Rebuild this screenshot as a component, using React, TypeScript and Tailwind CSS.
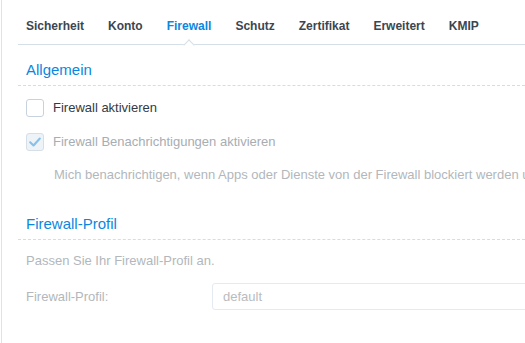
import React from "react";

const TABS = ["Sicherheit", "Konto", "Firewall", "Schutz", "Zertifikat", "Erweitert", "KMIP"];
const ACTIVE_TAB = "Firewall";

const SectionTitle: React.FC<{ title: string; className?: string }> = ({ title, className }) => (
  <div
    className={`pl-2 pb-[6px] border-b border-dashed border-[#d3dde6] text-[15px] leading-[18px] text-[#0a87e0] ${className ?? ""}`}
  >
    {title}
  </div>
);

const Checkbox: React.FC<{ checked?: boolean; disabled?: boolean }> = ({ checked, disabled }) => (
  <span
    className={`flex h-[18px] w-[18px] shrink-0 items-center justify-center rounded-[3px] border ${
      disabled ? "border-[#d5dfe8] bg-[#eef3f7]" : "border-[#c6d3de] bg-white"
    }`}
  >
    {checked && (
      <svg viewBox="0 0 16 16" className="h-[14px] w-[14px]" fill="none">
        <path d="M2.5 8.3 L6.3 12 L13.5 4" stroke="#86c0eb" strokeWidth="2.4" strokeLinecap="round" strokeLinejoin="round" />
      </svg>
    )}
  </span>
);

export default function App() {
  return (
    <div
      className="h-[343px] w-[525px] overflow-hidden bg-white"
      style={{ fontFamily: '"Liberation Sans", Arial, sans-serif' }}
    >
      <div className="ml-px h-full border-l border-[#dde3e8]">
        {/* tabs */}
        <div className="ml-[16px] flex h-[45px] gap-6 border-b border-[#d5dfe7] pl-2 pt-[18px]">
          {TABS.map((tab) => (
            <div
              key={tab}
              className={`relative whitespace-nowrap text-[12px] font-bold leading-[16px] ${
                tab === ACTIVE_TAB ? "text-[#0a87e0]" : "text-[#3b4651]"
              }`}
            >
              {tab}
              {tab === ACTIVE_TAB && (
                <span className="absolute left-1/2 top-[23px] h-[8px] w-[8px] -translate-x-1/2 rotate-45 border-l border-t border-[#d5dfe7] bg-white" />
              )}
            </div>
          ))}
        </div>

        <div className="ml-[16px]">
          <SectionTitle title="Allgemein" className="mt-[16px]" />

          <div className="pl-2 text-[13px] leading-[16px]">
            <label className="mt-[13px] flex items-center gap-[9px] text-[#323b44]">
              <Checkbox />
              <span>Firewall aktivieren</span>
            </label>
            <label className="mt-[16px] flex items-center gap-[9px] text-[#a7adb3]">
              <Checkbox checked disabled />
              <span>Firewall Benachrichtigungen aktivieren</span>
            </label>
            <p className="mt-[16px] whitespace-nowrap pl-[28px] text-[#b2b7bc]">
              Mich benachrichtigen, wenn Apps oder Dienste von der Firewall blockiert werden und
            </p>
          </div>

          <SectionTitle title="Firewall-Profil" className="mt-[32px]" />

          <div className="pl-2 text-[13px] leading-[16px] text-[#b2b7bc]">
            <p className="mt-[13px]">Passen Sie Ihr Firewall-Profil an.</p>
            <div className="mt-[14px] flex items-center">
              <span className="w-[186px] shrink-0">Firewall-Profil:</span>
              <div className="flex h-[27px] w-[330px] shrink-0 items-center rounded-[3px] border border-[#e4eaef] pl-[10px] text-[#b8bcc1]">
                default
              </div>
            </div>
          </div>
        </div>
      </div>
    </div>
  );
}
